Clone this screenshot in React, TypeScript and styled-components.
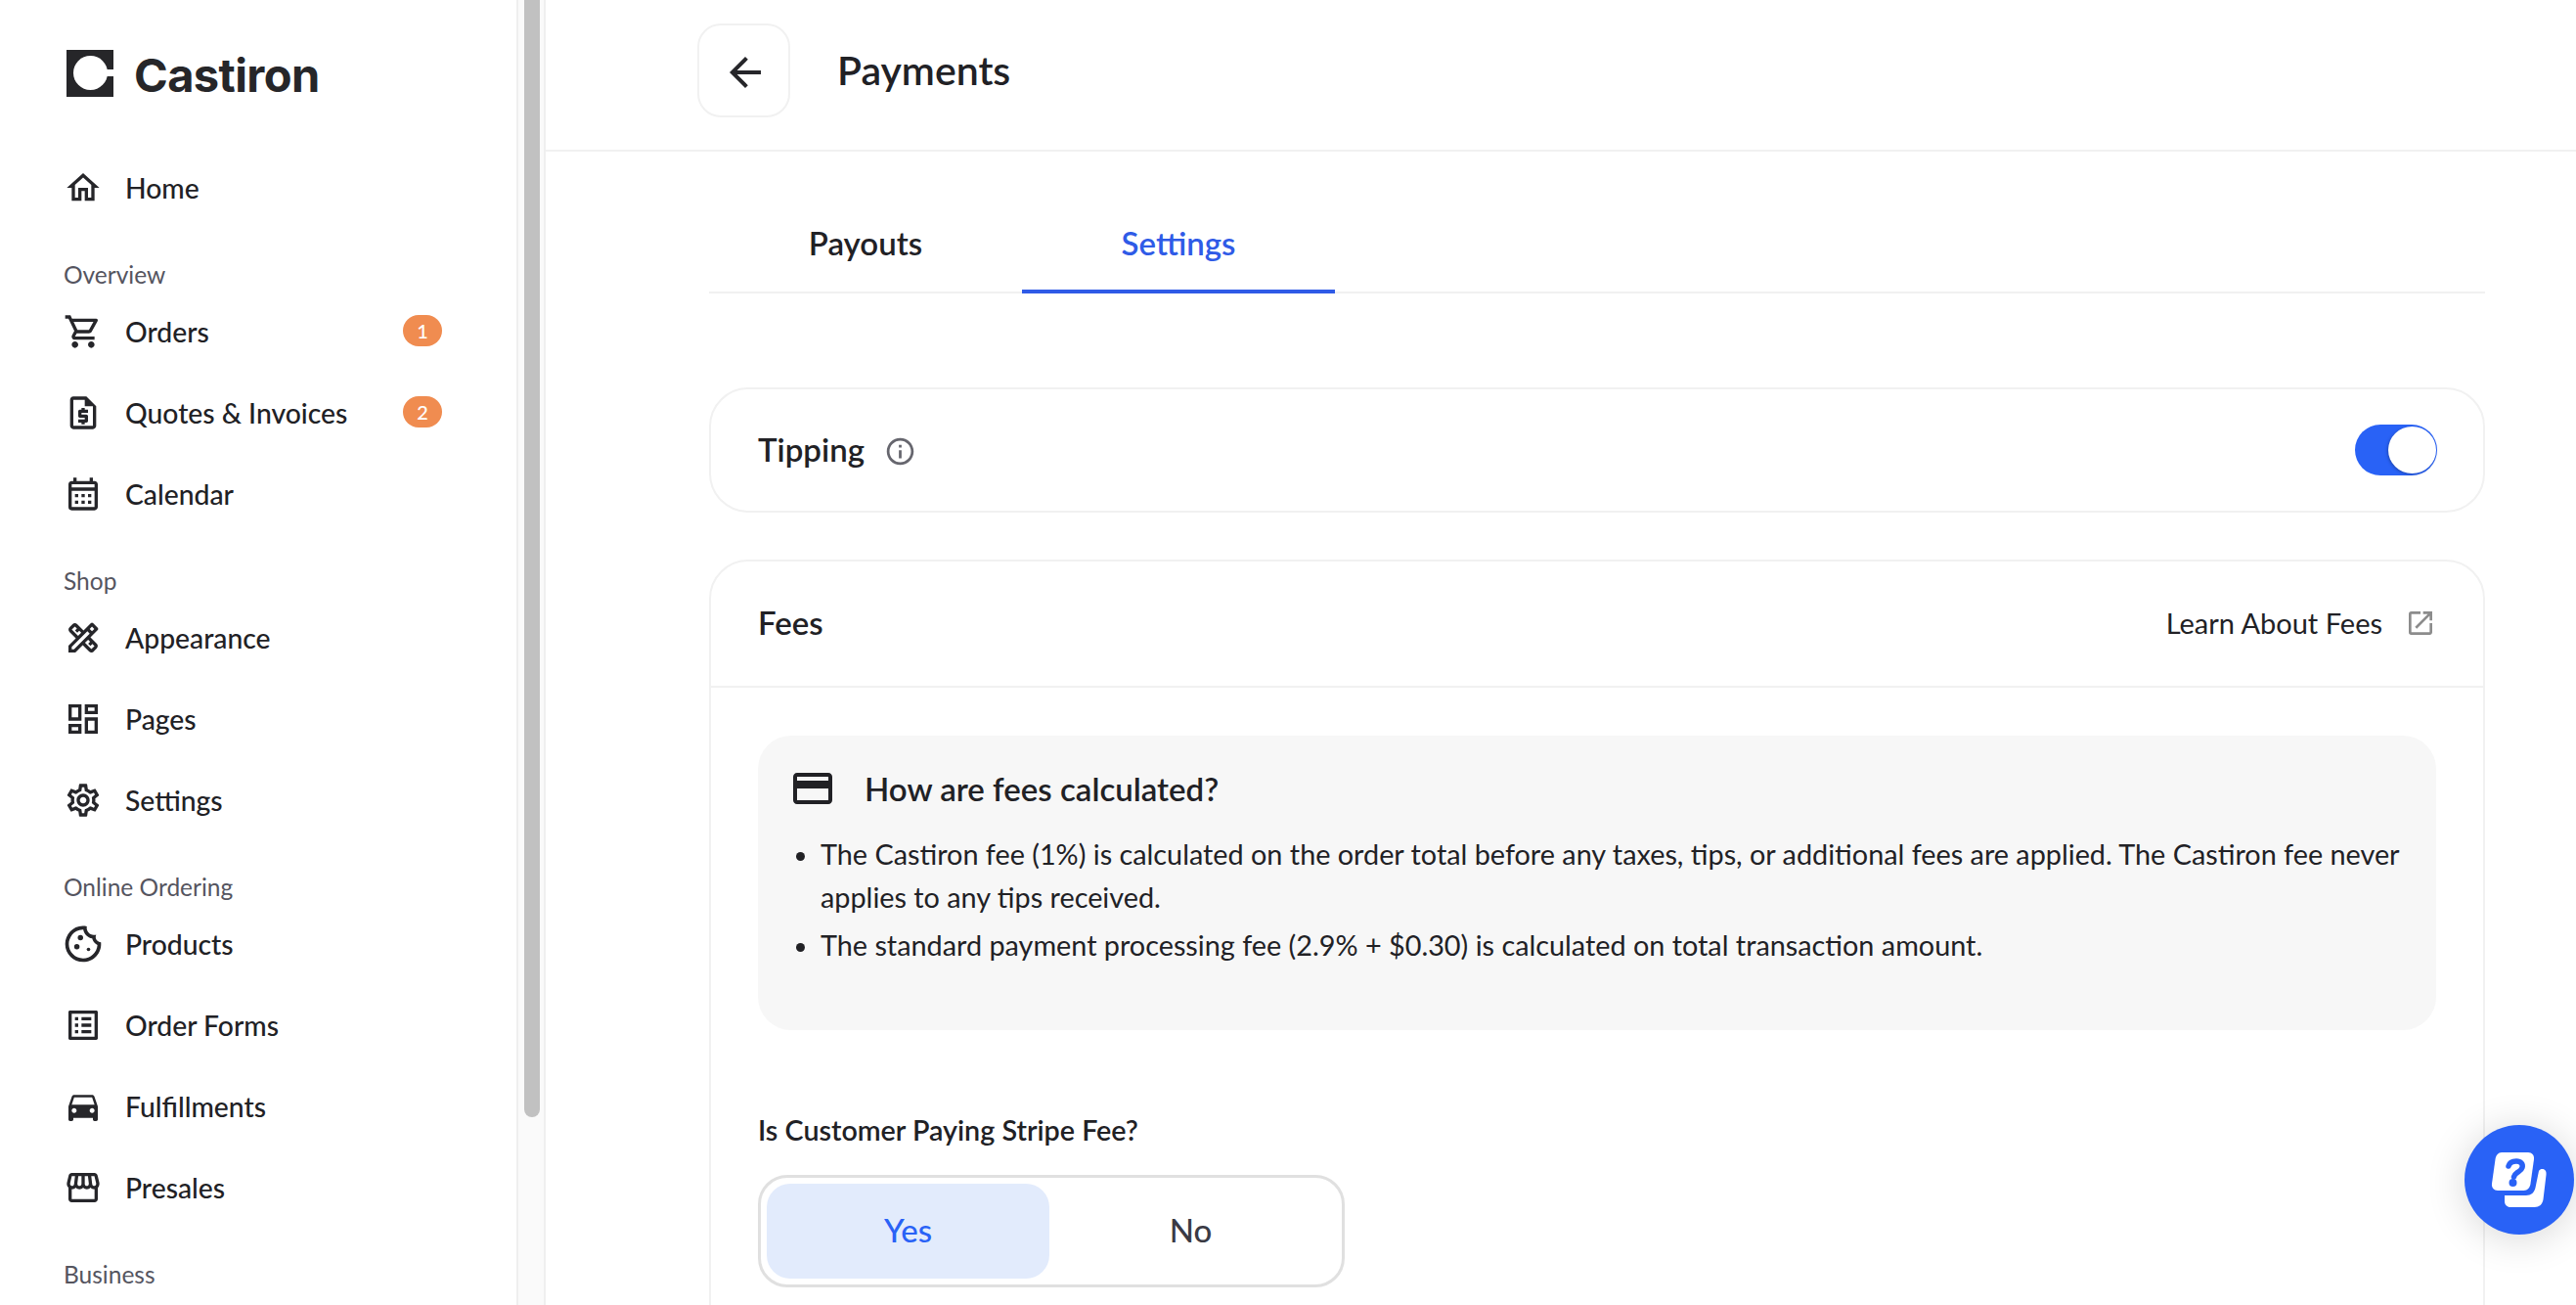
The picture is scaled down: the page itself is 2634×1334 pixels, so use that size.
import styled, { createGlobalStyle } from 'styled-components'
import type { ReactNode } from 'react'
import {
  MdOutlineHome,
  MdOutlineShoppingCart,
  MdOutlineRequestQuote,
  MdOutlineCalendarMonth,
  MdOutlineDesignServices,
  MdOutlineDashboard,
  MdOutlineSettings,
  MdOutlineCookie,
  MdOutlineListAlt,
  MdDirectionsCar,
  MdOutlineStorefront,
  MdArrowBack,
  MdInfoOutline,
  MdOpenInNew,
  MdOutlineCreditCard,
} from 'react-icons/md'

const GlobalStyle = createGlobalStyle`
  html, body {
    margin: 0;
    height: 100%;
    overflow: hidden;
    background: #fff;
  }
  body {
    font-family: 'Lato', 'Noto Sans', sans-serif;
    color: #212125;
  }
`

const Page = styled.div`
  display: flex;
  height: 100vh;
  overflow: hidden;
`

const Sidebar = styled.aside`
  width: 528px;
  flex: none;
  box-sizing: border-box;
  padding: 50px 0 0 65px;
  background: #fff;
  overflow: hidden;
`

const Brand = styled.div`
  display: flex;
  align-items: center;
  gap: 21px;
  height: 50px;
  margin: 0 0 50px 3px;
  font-family: 'Inter', sans-serif;
  font-weight: 700;
  font-size: 47px;
  letter-spacing: -0.6px;
  color: #262629;
`

const BrandName = styled.span`
  margin-top: 2px;
`

const NavRow = styled.div`
  display: flex;
  align-items: center;
  height: 83px;
  width: 387px;
  gap: 23px;
  font-size: 28.3px;
  font-weight: 500;
  color: #212125;
  svg {
    flex: none;
    width: 40px;
    height: 40px;
    color: #26262a;
  }
`

const CookieIcon = styled(MdOutlineCookie)`
  && {
    width: 44px;
    height: 44px;
    margin: 0 -2px;
  }
`

const NavLabel = styled.span`
  flex: 1;
`

const Badge = styled.span`
  width: 40px;
  height: 32px;
  margin-top: -2px;
  border-radius: 16px;
  background: #f08c50;
  color: #fff;
  font-size: 20px;
  display: flex;
  align-items: center;
  justify-content: center;
`

const SectionLabel = styled.div`
  margin: 33px 0 1px;
  height: 30px;
  line-height: 30px;
  font-size: 24.5px;
  color: #55555f;
`

const ScrollTrack = styled.div`
  width: 30px;
  flex: none;
  box-sizing: border-box;
  padding-left: 6px;
  background: #fafafa;
  border-left: 2px solid #efefef;
  border-right: 2px solid #efefef;
  height: 100%;
`

const ScrollThumb = styled.div`
  height: 1142px;
  width: 16px;
  border-radius: 0 0 8px 8px;
  background: #c1c1c1;
`

const Main = styled.main`
  flex: 1;
  min-width: 0;
  overflow: hidden;
`

const Header = styled.header`
  display: flex;
  align-items: center;
  height: 153px;
  box-sizing: content-box;
  border-bottom: 2px solid #f1f1f1;
  padding-left: 155px;
  gap: 48px;
`

const BackButton = styled.button`
  width: 95px;
  height: 96px;
  margin-top: -9px;
  box-sizing: border-box;
  border: 2px solid #f1f1f1;
  border-radius: 24px;
  background: #fff;
  display: flex;
  align-items: center;
  justify-content: center;
  padding: 0;
  svg {
    width: 48px;
    height: 48px;
    color: #26262a;
    margin: 4px 0 0 3px;
  }
`

const Title = styled.h1`
  margin: -11px 0 0;
  font-size: 41px;
  font-weight: 600;
  color: #212125;
`

const Content = styled.div`
  width: 1816px;
  margin-left: 167px;
`

const Tabs = styled.div`
  display: flex;
  height: 145px;
  box-sizing: border-box;
  border-bottom: 2px solid #f1f1f1;
`

const Tab = styled.div<{ $active?: boolean }>`
  width: 320px;
  height: 145px;
  box-sizing: border-box;
  padding-top: 73px;
  text-align: center;
  font-size: 33px;
  line-height: 40px;
  font-weight: 600;
  color: ${({ $active }) => ($active ? '#2f5be7' : '#212125')};
  border-bottom: 4px solid ${({ $active }) => ($active ? '#2f5be7' : 'transparent')};
`

const Card = styled.section`
  border: 2px solid #f1f1f1;
  border-radius: 40px;
  background: #fff;
`

const TippingCard = styled(Card)`
  margin-top: 96px;
  height: 128px;
  box-sizing: border-box;
  padding: 0 47px 0 48px;
  display: flex;
  align-items: center;
`

const CardTitle = styled.div`
  font-size: 33px;
  font-weight: 600;
  color: #212125;
  margin-top: -3px;
`

const InfoIcon = styled(MdInfoOutline)`
  width: 33px;
  height: 33px;
  margin: 2px 0 0 20px;
  color: #66666e;
`

const Switch = styled.div`
  margin-left: auto;
  width: 84px;
  height: 52px;
  border-radius: 26px;
  background: #2962f6;
  display: flex;
  align-items: center;
  justify-content: flex-end;
  padding-right: 1px;
  box-sizing: border-box;
`

const Knob = styled.span`
  width: 49px;
  height: 48px;
  border-radius: 50%;
  background: #fff;
  box-shadow: -1px 1px 3px rgba(0, 0, 0, 0.25);
`

const FeesCard = styled(Card)`
  margin-top: 48px;
  height: 900px;
`

const FeesHeader = styled.div`
  height: 129px;
  box-sizing: border-box;
  border-bottom: 2px solid #f1f1f1;
  display: flex;
  align-items: center;
  justify-content: space-between;
  padding: 0 48px;
`

const LearnLink = styled.a`
  display: flex;
  align-items: center;
  gap: 23px;
  margin-top: -2px;
  font-size: 29px;
  font-weight: 400;
  color: #212125;
  svg {
    width: 32px;
    height: 32px;
    color: #8c8c8c;
  }
`

const FeesBody = styled.div`
  padding: 49px 48px 48px;
`

const InfoBox = styled.div`
  height: 301px;
  box-sizing: border-box;
  padding: 33px 34px 0;
  background: #f7f7f7;
  border-radius: 34px;
`

const InfoHeading = styled.div`
  display: flex;
  align-items: center;
  gap: 29px;
  height: 42px;
  font-size: 33px;
  font-weight: 600;
  color: #212125;
  svg {
    width: 48px;
    height: 48px;
    margin-left: -2px;
    color: #212125;
  }
`

const FeeList = styled.ul`
  margin: 24px 0 0;
  padding: 0 0 0 30px;
  font-size: 28.8px;
  line-height: 44px;
  color: #212125;
  li + li {
    margin-top: 5px;
  }
`

const Question = styled.div`
  margin-top: 85px;
  font-size: 28.7px;
  line-height: 34px;
  font-weight: 600;
  color: #212125;
`

const Segmented = styled.div`
  margin-top: 29px;
  width: 600px;
  height: 115px;
  box-sizing: border-box;
  border: 3px solid #e0e0e0;
  border-radius: 30px;
  padding: 6px;
  display: flex;
`

const Segment = styled.div<{ $active?: boolean }>`
  width: 289px;
  height: 97px;
  padding-bottom: 3px;
  box-sizing: border-box;
  border-radius: 24px;
  display: flex;
  align-items: center;
  justify-content: center;
  font-size: 33px;
  font-weight: 500;
  background: ${({ $active }) => ($active ? '#e2ebfc' : 'transparent')};
  color: ${({ $active }) => ($active ? '#2962f6' : '#3a3a44')};
`

const HelpButton = styled.div`
  position: fixed;
  left: 2520px;
  top: 1150px;
  width: 112px;
  height: 112px;
  border-radius: 50%;
  background: #2962f6;
  box-shadow: 0 4px 40px rgba(0, 0, 0, 0.16);
  display: flex;
  align-items: center;
  justify-content: center;
`

const HelpGlyph = () => (
  <svg width="112" height="112" viewBox="0 0 112 112">
    <path
      fill="#fff"
      d="M76 47c1-1.500 2-2 3.500-2 3 0 4.500 2.500 4 6l-3 25c-.7 5-4 8-9 8H47c-3.500 0-6-2.500-6-6v-6h22c5 0 8.500-3 9.500-8z"
    />
    <path
      fill="#fff"
      d="M38 28h27c4 0 6.500 3 6 7l-3.500 25c-.6 4-3 7-7 7H34c-4 0-6.500-3-6-7l3.500-25c.6-4 3-7 6.500-7z"
    />
    <path
      fill="none"
      stroke="#2962f6"
      strokeWidth="5.500"
      strokeLinecap="round"
      d="M45 42c1-3.500 4.500-5 8-5 4.500 0 7 3 6 6.500-.8 3-3.500 4-5.500 5.500-1.500 1-2.500 2-3 4"
    />
    <circle cx="49.500" cy="59" r="4" fill="#2962f6" />
  </svg>
)

const LogoMark = () => (
  <svg width="48" height="48" viewBox="0 0 48 48">
    <rect width="48" height="48" fill="#262629" />
    <circle cx="24.500" cy="23.500" r="17.500" fill="#fff" />
    <rect x="30" y="20" width="18" height="7" fill="#fff" />
  </svg>
)

type NavItem = { icon: ReactNode; label: string; badge?: number }
type NavGroup = { title?: string; items: NavItem[] }

const groups: NavGroup[] = [
  { items: [{ icon: <MdOutlineHome />, label: 'Home' }] },
  {
    title: 'Overview',
    items: [
      { icon: <MdOutlineShoppingCart />, label: 'Orders', badge: 1 },
      { icon: <MdOutlineRequestQuote />, label: 'Quotes & Invoices', badge: 2 },
      { icon: <MdOutlineCalendarMonth />, label: 'Calendar' },
    ],
  },
  {
    title: 'Shop',
    items: [
      { icon: <MdOutlineDesignServices />, label: 'Appearance' },
      { icon: <MdOutlineDashboard />, label: 'Pages' },
      { icon: <MdOutlineSettings />, label: 'Settings' },
    ],
  },
  {
    title: 'Online Ordering',
    items: [
      { icon: <CookieIcon />, label: 'Products' },
      { icon: <MdOutlineListAlt />, label: 'Order Forms' },
      { icon: <MdDirectionsCar />, label: 'Fulfillments' },
      { icon: <MdOutlineStorefront />, label: 'Presales' },
    ],
  },
  { title: 'Business', items: [] },
]

const App = () => {
  return (
    <Page>
      <GlobalStyle />
      <Sidebar>
        <Brand>
          <LogoMark />
          <BrandName>Castiron</BrandName>
        </Brand>
        {groups.map((group, i) => (
          <div key={i}>
            {group.title && <SectionLabel>{group.title}</SectionLabel>}
            {group.items.map((item) => (
              <NavRow key={item.label}>
                {item.icon}
                <NavLabel>{item.label}</NavLabel>
                {item.badge && <Badge>{item.badge}</Badge>}
              </NavRow>
            ))}
          </div>
        ))}
      </Sidebar>
      <ScrollTrack>
        <ScrollThumb />
      </ScrollTrack>
      <Main>
        <Header>
          <BackButton aria-label="Back">
            <MdArrowBack />
          </BackButton>
          <Title>Payments</Title>
        </Header>
        <Content>
          <Tabs>
            <Tab>Payouts</Tab>
            <Tab $active>Settings</Tab>
          </Tabs>
          <TippingCard>
            <CardTitle>Tipping</CardTitle>
            <InfoIcon />
            <Switch>
              <Knob />
            </Switch>
          </TippingCard>
          <FeesCard>
            <FeesHeader>
              <CardTitle>Fees</CardTitle>
              <LearnLink>
                Learn About Fees
                <MdOpenInNew />
              </LearnLink>
            </FeesHeader>
            <FeesBody>
              <InfoBox>
                <InfoHeading>
                  <MdOutlineCreditCard />
                  How are fees calculated?
                </InfoHeading>
                <FeeList>
                  <li>
                    The Castiron fee (1%) is calculated on the order total before any taxes, tips, or
                    additional fees are applied. The Castiron fee never applies to any tips received.
                  </li>
                  <li>
                    The standard payment processing fee (2.9% + $0.30) is calculated on total transaction
                    amount.
                  </li>
                </FeeList>
              </InfoBox>
              <Question>Is Customer Paying Stripe Fee?</Question>
              <Segmented>
                <Segment $active>Yes</Segment>
                <Segment>No</Segment>
              </Segmented>
            </FeesBody>
          </FeesCard>
        </Content>
      </Main>
      <HelpButton>
        <HelpGlyph />
      </HelpButton>
    </Page>
  )
}

export default App
